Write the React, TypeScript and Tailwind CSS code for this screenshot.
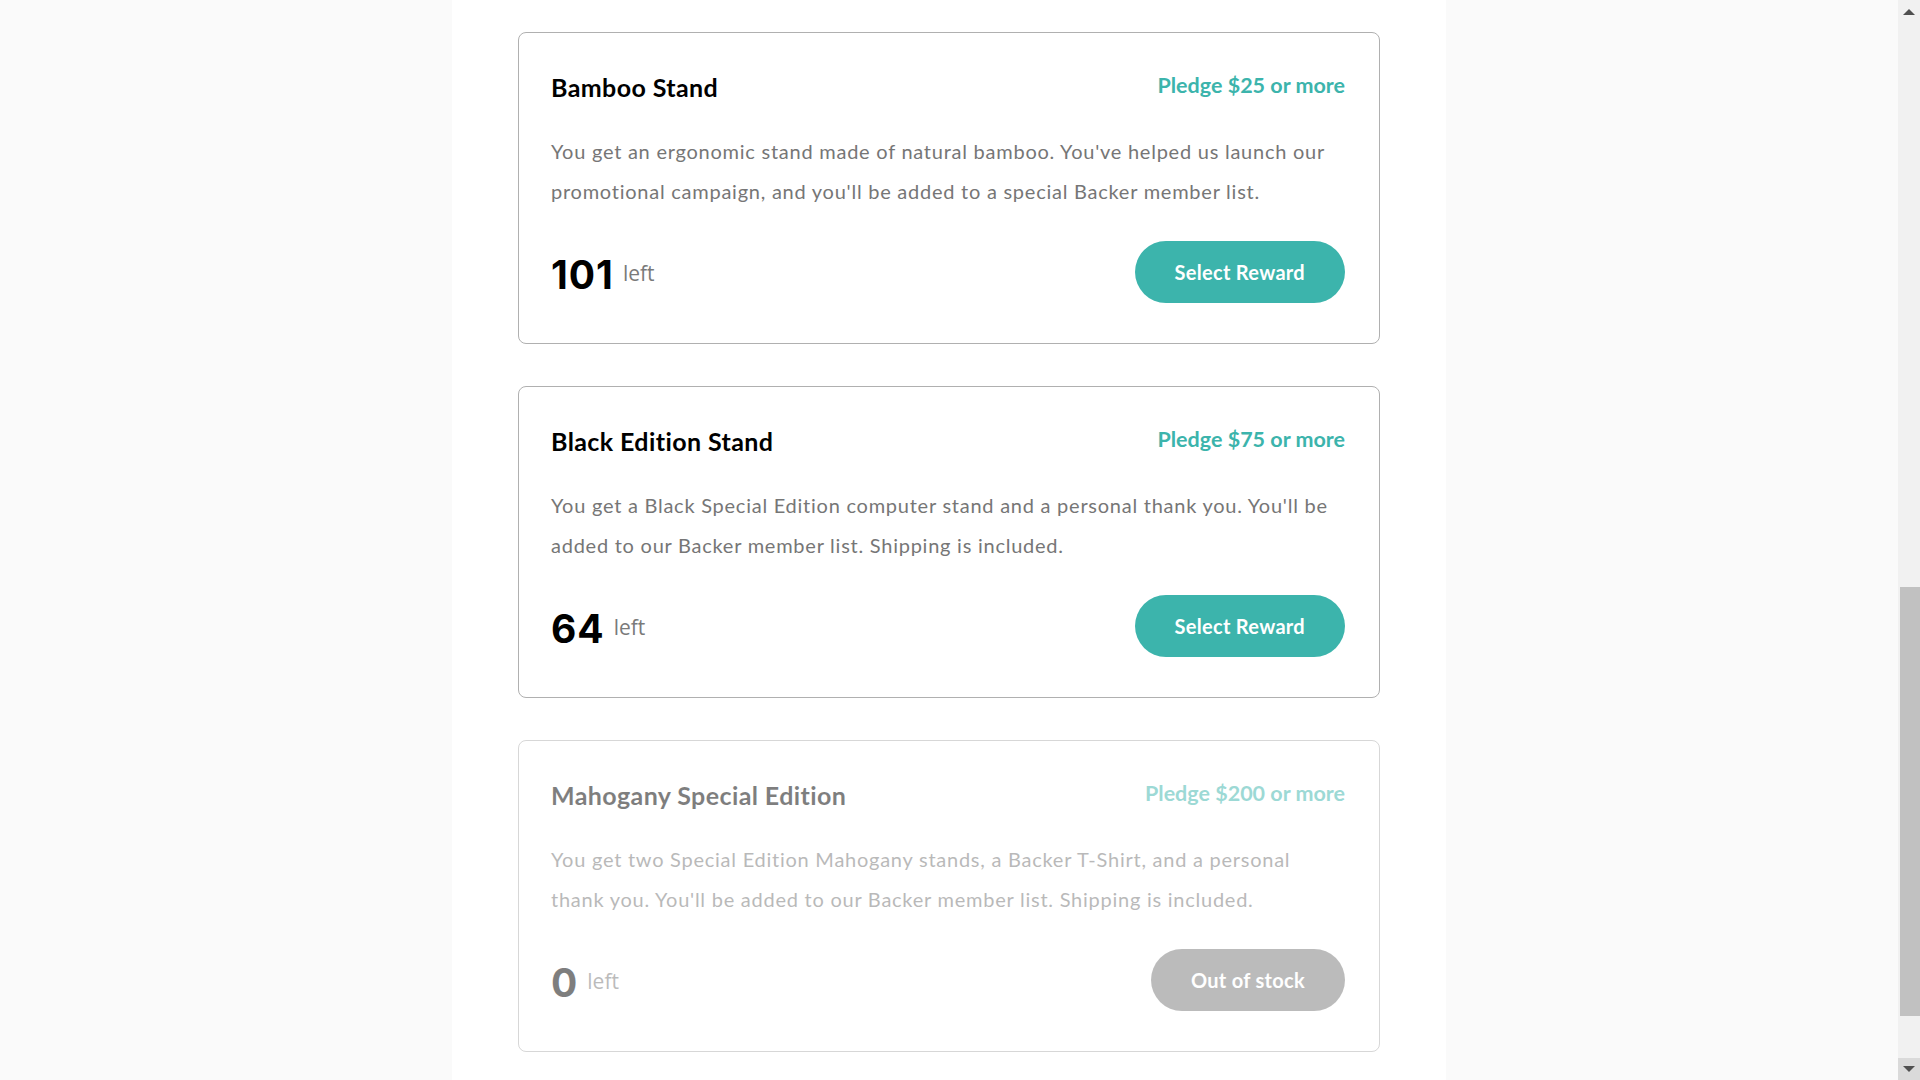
import React from "react";

type Reward = {
  title: string;
  pledge: number;
  description: string;
  left: number;
};

const rewards: Reward[] = [
  {
    title: "Bamboo Stand",
    pledge: 25,
    description:
      "You get an ergonomic stand made of natural bamboo. You've helped us launch our promotional campaign, and you'll be added to a special Backer member list.",
    left: 101,
  },
  {
    title: "Black Edition Stand",
    pledge: 75,
    description:
      "You get a Black Special Edition computer stand and a personal thank you. You'll be added to our Backer member list. Shipping is included.",
    left: 64,
  },
  {
    title: "Mahogany Special Edition",
    pledge: 200,
    description:
      "You get two Special Edition Mahogany stands, a Backer T-Shirt, and a personal thank you. You'll be added to our Backer member list. Shipping is included.",
    left: 0,
  },
];

function RewardCard({ reward }: { reward: Reward }) {
  const out = reward.left === 0;
  return (
    <article
      className={`rounded-lg border border-[#b0b0b0] pb-10 pl-8 pr-[34px] pt-10 ${out ? "opacity-50" : ""}`}
    >
      <div className="flex items-start justify-between">
        <h3 className="text-[25px] font-bold leading-[1.16] tracking-[0.4px] text-black">
          {reward.title}
        </h3>
        <p className="text-[21.5px] font-bold leading-[1.2] text-[#3cb4ac]">
          Pledge ${reward.pledge} or more
        </p>
      </div>
      <p className="mt-[29px] text-[20px] leading-[40px] tracking-[0.75px] text-[#767676]">
        {reward.description}
      </p>
      <div className="mt-[30px] flex h-[62px] items-center justify-between">
        <div className="flex items-center gap-[9px]">
          <span className="mt-[4px] font-['Inter',sans-serif] text-[39px] font-bold leading-none tracking-[1px] text-black">
            {reward.left}
          </span>
          <span className="mt-[2px] font-['Open_Sans',sans-serif] text-[21px] leading-none text-[#7a7a7a]">
            left
          </span>
        </div>
        <button
          className={`h-[62px] rounded-full px-10 text-[20px] font-bold tracking-[0.3px] text-white ${
            out ? "bg-[#7a7a7a]" : "bg-[#3cb4ac]"
          }`}
        >
          {out ? "Out of stock" : "Select Reward"}
        </button>
      </div>
    </article>
  );
}

function Scrollbar() {
  return (
    <div className="flex h-full w-[22px] flex-col bg-[#f1f1f1]">
      <div className="flex h-[21px] items-center justify-center pt-[3px]">
        <svg width="12" height="6" viewBox="0 0 12 6">
          <path d="M0 6 L6 0 L12 6 Z" fill="#505050" />
        </svg>
      </div>
      <div className="flex-1" />
      <div className="ml-[2px] h-[429px] bg-[#c1c1c1]" />
      <div className="h-[42px]" />
      <div className="flex h-[22px] items-center justify-center bg-[#dadada]">
        <svg width="12" height="6" viewBox="0 0 12 6">
          <path d="M0 0 L6 6 L12 0 Z" fill="#505050" />
        </svg>
      </div>
    </div>
  );
}

export default function App() {
  return (
    <div className="flex h-screen overflow-hidden bg-[#fafafa] font-['Lato','Open_Sans',sans-serif]">
      <div className="flex-1">
        <main className="ml-[452px] h-full w-[994px] bg-white">
          <div className="flex flex-col gap-[42px] px-[66px] pt-[32px]">
            {rewards.map((r) => (
              <RewardCard key={r.title} reward={r} />
            ))}
          </div>
        </main>
      </div>
      <Scrollbar />
    </div>
  );
}
